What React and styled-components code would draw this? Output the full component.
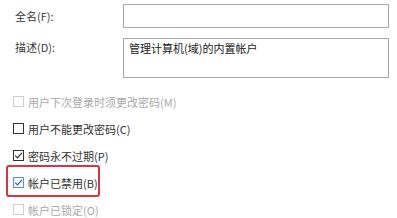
import React from "react";
import styled, { createGlobalStyle } from "styled-components";

const options = [
  { label: "用户下次登录时须更改密码(M)", disabled: true },
  { label: "用户不能更改密码(C)" },
  { label: "密码永不过期(P)", checked: true },
  { label: "帐户已禁用(B)", checked: true, focused: true, marked: true },
  { label: "帐户已锁定(O)", disabled: true },
];

function App() {
  return (
    <>
      <GlobalStyle />
      <Page>
        <Field>
          <Label>全名(F):</Label>
          <Input />
        </Field>
        <Field $tall>
          <Label $top>描述(D):</Label>
          <Input $tall>管理计算机(域)的内置帐户</Input>
        </Field>
        <Options>
          {options.map((o) => (
            <Option key={o.label} $disabled={o.disabled} $marked={o.marked}>
              <Box $disabled={o.disabled} $focused={o.focused}>
                {o.checked && (
                  <svg width="9" height="9" viewBox="0 0 9 9">
                    <path
                      d="M1.2 4.6 L3.5 6.9 L7.9 1.8"
                      fill="none"
                      stroke={o.focused ? "#2d5f86" : "#333"}
                      strokeWidth="1.2"
                    />
                  </svg>
                )}
              </Box>
              <span>{o.label}</span>
            </Option>
          ))}
        </Options>
      </Page>
    </>
  );
}

export default App;

//styles

const GlobalStyle = createGlobalStyle`
  html, body {
    margin: 0;
    background: #fff;
  }
  body {
    font-family: "Noto Sans CJK SC", "Noto Sans", sans-serif;
    font-size: 11px;
    color: #333;
  }
`;

const Page = styled.div`
  width: 397px;
  height: 218px;
  padding-top: 4px;
  box-sizing: border-box;
  overflow: hidden;
`;

const Field = styled.div`
  display: flex;
  align-items: ${(p) => (p.$tall ? "flex-start" : "center")};
  margin-bottom: 10px;
`;

const Label = styled.div`
  width: 108px;
  padding-left: 15px;
  line-height: 14px;
  padding-top: ${(p) => (p.$top ? "2px" : "0")};
  color: #3a3a3a;
`;

const Input = styled.div`
  width: 266px;
  height: ${(p) => (p.$tall ? "40px" : "24px")};
  box-sizing: border-box;
  border: 1px solid #a6a6a6;
  padding: 2px 5px;
  line-height: 14px;
  color: #222;
`;

const Options = styled.div`
  display: flex;
  flex-direction: column;
  margin-top: 1px;
`;

const Option = styled.div`
  position: relative;
  display: flex;
  align-items: center;
  gap: 4px;
  height: 27px;
  padding-left: 13px;
  color: ${(p) => (p.$disabled ? "#a9a9a9" : "#333")};

  ${(p) =>
    p.$marked &&
    `
    &::after {
      content: "";
      position: absolute;
      left: 6px;
      top: -4px;
      width: 90px;
      height: 28px;
      border: 2px solid #d7363c;
      border-radius: 3px;
    }
  `}
`;

const Box = styled.span`
  display: flex;
  align-items: center;
  justify-content: center;
  width: 11px;
  height: 11px;
  box-sizing: border-box;
  border: 1px solid
    ${(p) => (p.$disabled ? "#cfcfcf" : p.$focused ? "#4d97c4" : "#333")};
  background: #fff;
`;
